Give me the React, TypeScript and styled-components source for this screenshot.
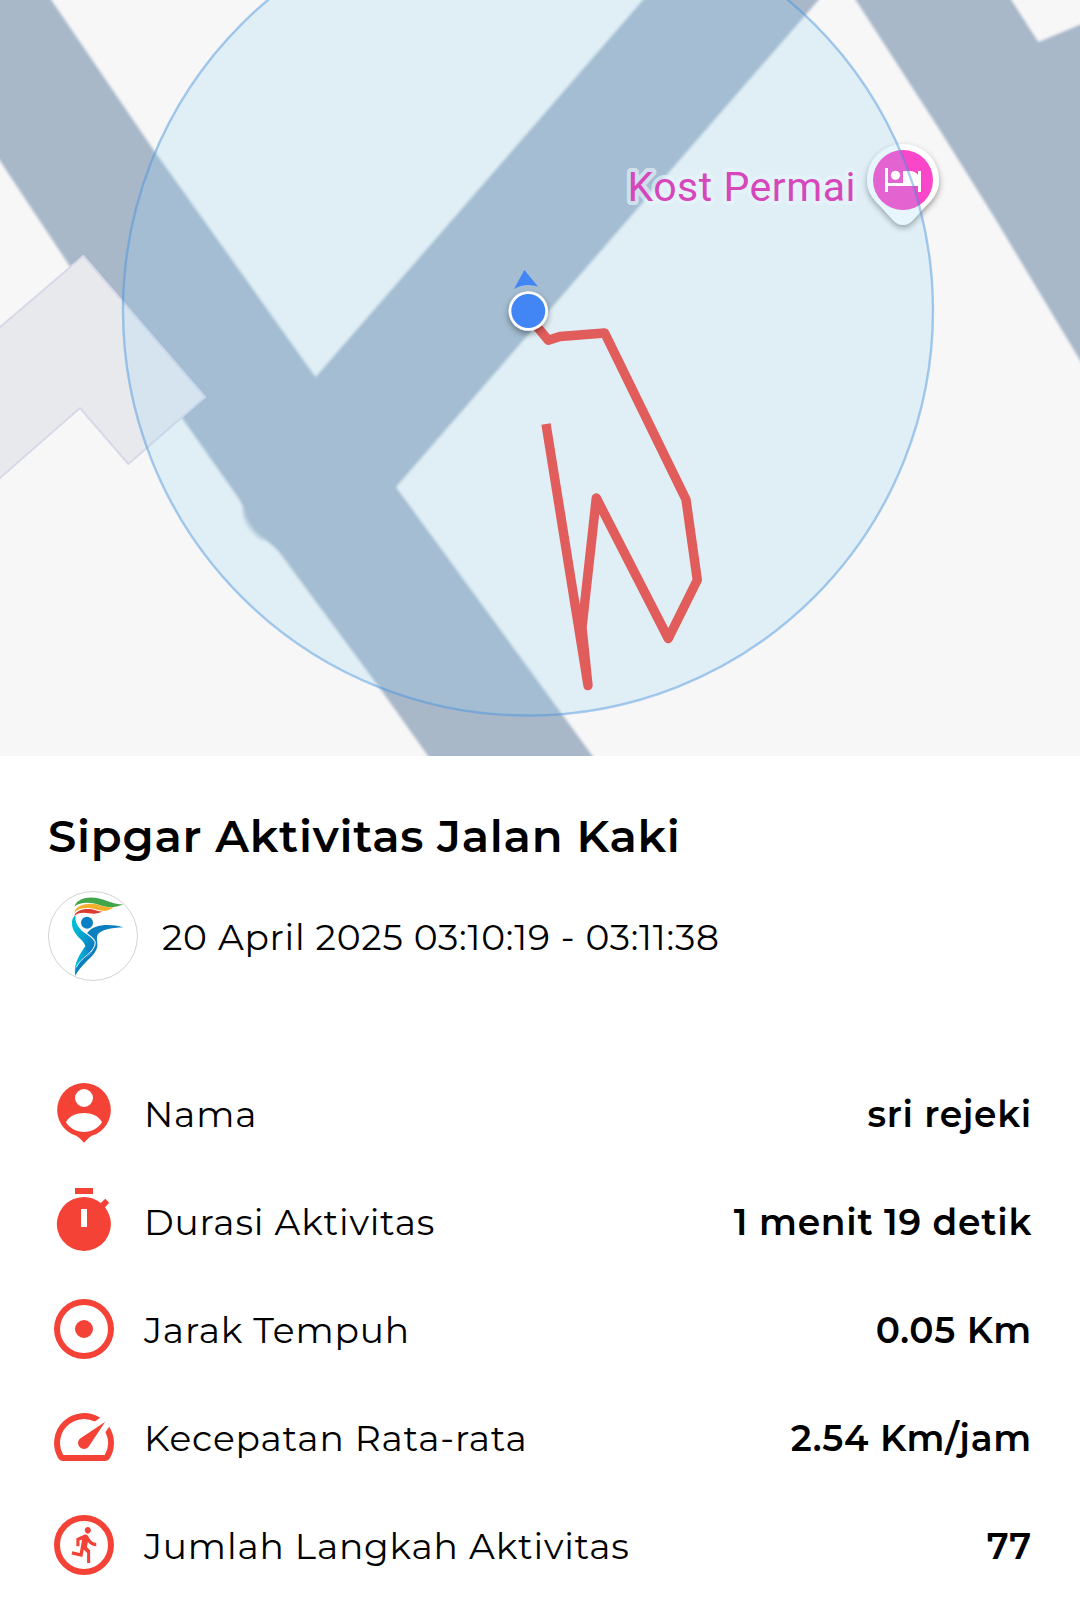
import React from 'react';
import styled, { createGlobalStyle } from 'styled-components';

const GlobalStyle = createGlobalStyle`
  *,
  *::before,
  *::after {
    box-sizing: border-box;
  }

  body {
    margin: 0;
    background: #ffffff;
    color: #000000;
    font-family: Montserrat, Inter, sans-serif;
    letter-spacing: 0.75px;
  }
`;

const PageContainer = styled.main`
  display: flex;
  flex-direction: column;
  width: 1080px;
  height: 1609px;
  overflow: hidden;
`;

const MapWrapper = styled.section`
  flex: none;
  height: 756px;
  background: #f7f7f7;
`;

const MapDrawing = styled.svg`
  display: block;
  width: 100%;
  height: 100%;
`;

const PlaceLabel = styled.text`
  font-family: Roboto, sans-serif;
  font-size: 41px;
  letter-spacing: 0;
  fill: #e821ac;
  stroke: rgba(255, 255, 255, 0.65);
  stroke-width: 8px;
  stroke-linejoin: round;
  paint-order: stroke;
`;

const Details = styled.section`
  display: flex;
  flex-direction: column;
  padding: 52px 48px 0;
`;

const Title = styled.h1`
  margin: 0;
  font-size: 45px;
  font-weight: 600;
  line-height: 56px;
  white-space: nowrap;
`;

const Schedule = styled.div`
  display: flex;
  align-items: center;
  gap: 24px;
  margin-top: 27px;
`;

const LogoDrawing = styled.svg`
  flex: none;
  width: 90px;
  height: 90px;
`;

const ScheduleText = styled.time`
  padding-top: 2px;
  font-size: 36px;
  font-weight: 400;
  line-height: 42px;
  white-space: nowrap;
`;

const StatList = styled.ul`
  display: flex;
  flex-direction: column;
  gap: 36px;
  margin: 96px 0 0;
  padding: 0;
  list-style: none;
`;

const StatRow = styled.li`
  display: flex;
  align-items: center;
  height: 72px;
`;

const StatIcon = styled.svg`
  flex: none;
  width: 72px;
  height: 72px;
  margin-right: 24px;
  fill: #f44336;
`;

const StatText = styled.span<{ $strong?: boolean }>`
  padding-top: 2px;
  font-size: 36px;
  font-weight: ${({ $strong }) => ($strong ? 600 : 400)};
  line-height: 42px;
  letter-spacing: ${({ $strong }) => ($strong ? 0.75 : 0.82)}px;
  white-space: nowrap;

  &:last-child {
    margin-left: auto;
  }
`;

const ROUTE =
  'M525 312L548.3 340.3L560 336.5L604.7 333L686 499.5L697.3 580L668.3 638.5L596.3 498L582 627.5L588 685.5L546 424';

const ActivityMap: React.FC = () => (
  <MapWrapper>
    <MapDrawing viewBox="0 0 1080 756">
      <defs>
        <filter id="roadSoft" x="-5%" y="-5%" width="110%" height="110%">
          <feGaussianBlur stdDeviation="1.5" />
        </filter>
        <filter id="drop" x="-30%" y="-30%" width="160%" height="160%">
          <feDropShadow dx="0" dy="3" stdDeviation="3" floodOpacity="0.4" />
        </filter>
        <clipPath id="belowStart">
          <rect y="424" width="1080" height="332" />
          <rect x="524" width="556" height="756" />
        </clipPath>
      </defs>

      {/* roads */}
      <g fill="#a9b8c9" stroke="#a3b4c6" strokeWidth="2" filter="url(#roadSoft)">
        <path d="M-20 -30H29L50 0L153 151L315.5 379L644.5 0L671 -30H842L817 0L394.5 487L592 757L607 778H445L430 757L381 688L279 550Q273 544 262 536Q252 527 247 516Q245 505 237.6 495L184 419L71 266L0 159L-20 130Z" />
        <path d="M838 -30L857 0L941 130L996 218L1080 358L1110 410V12L1080 26L1038 43.5L1010 0L992 -30Z" />
      </g>
      <path
        d="M242 506Q242 530 265 542L258 524Z"
        fill="#a9b8c9"
        fillOpacity="0.5"
        filter="url(#roadSoft)"
      />

      {/* building */}
      <path
        d="M-4 330.5L83.3 256L205 397L128.4 464L80 408L-4 481.5Z"
        fill="#e8e9ed"
        stroke="#d8d9e8"
        strokeWidth="2"
        strokeLinejoin="round"
      />

      <PlaceLabel x="627.5" y="201" textLength="228">
        Kost Permai
      </PlaceLabel>
      <path
        d="M903 144A36 36 0 0 1 939 180C939 193 931 201 924 208L912 221Q903 229 894 221L882 208C875 201 867 193 867 180A36 36 0 0 1 903 144Z"
        fill="#ffffff"
        filter="url(#drop)"
      />
      <circle cx="903" cy="180" r="30" fill="#fa46c8" />

      {/* accuracy radius */}
      <circle cx="528" cy="310.5" r="405" fill="rgba(145, 210, 240, 0.22)" />

      <path
        d="M885 168H888V183H903V171H910Q915 171 918 175V171H921V192H918V186H888V192H885Z"
        fill="#ffffff"
      />
      <circle cx="895.5" cy="175.3" r="4.6" fill="#ffffff" />

      <circle
        cx="528"
        cy="310.5"
        r="405"
        fill="none"
        stroke="rgba(66, 144, 222, 0.45)"
        strokeWidth="2.4"
      />

      <path
        d={ROUTE}
        fill="none"
        stroke="#e05d5b"
        strokeWidth="9.4"
        strokeLinejoin="round"
        clipPath="url(#belowStart)"
      />

      {/* current position */}
      <path d="M524.3 270L538 286.5Q525 282.5 514 289Z" fill="#4285f4" />
      <circle cx="528.3" cy="311" r="19.7" fill="#ffffff" filter="url(#drop)" />
      <circle cx="528.3" cy="311" r="17" fill="#4285f4" />
    </MapDrawing>
  </MapWrapper>
);

const SipgarLogo: React.FC = () => (
  <LogoDrawing viewBox="24 33 270 270">
    <defs>
      <linearGradient id="body" x1="0" y1="0" x2="0.7" y2="1">
        <stop offset="0.2" stopColor="#00bcd4" />
        <stop offset="0.75" stopColor="#0a80c4" />
      </linearGradient>
      <linearGradient id="leg" x1="0" y1="0" x2="1" y2="0">
        <stop offset="0" stopColor="#00c4dc" />
        <stop offset="1" stopColor="#0a90c8" />
      </linearGradient>
    </defs>
    <circle cx="159" cy="168" r="133.5" fill="#ffffff" stroke="#b4b4b4" strokeWidth="1.8" />
    <path d="M103 80C112 53 148 48 180 56C205 62 225 74 250 73C225 84 205 83 185 77C155 66 122 64 103 80Z" fill="#43a54a" />
    <path d="M103 98C106 76 143 67 170 73C190 80 205 84 222 80C205 94 190 95 172 89C145 81 117 82 103 98Z" fill="#f3ae2b" />
    <path d="M103 109C105 92 133 84 155 88C170 92 180 96 189 94C175 102 160 102 148 100C128 96 112 98 103 109Z" fill="#dc3a33" />
    <circle cx="141" cy="128" r="18" fill="#0a80c4" />
    <path
      d="M103 108C92 120 94 142 106 160C118 178 135 185 136 201C125 220 102 245 105 287C112 250 160 225 164 188C160 174 140 164 124 150C110 137 105 123 107 108Z"
      fill="url(#body)"
    />
    <path d="M134 200C122 221 101 246 105 284C108 256 122 236 145 219Z" fill="url(#leg)" />
    <path
      d="M141 160C160 132 208 130 250 142C212 144 184 149 173 164C168 174 173 184 172 198C169 228 126 247 106 288C105 251 147 233 158 210C170 190 166 176 141 160Z"
      fill="#0a7fbe"
    />
    <path
      d="M123 149C143 166 166 172 166 190C164 216 122 232 109 262"
      fill="none"
      stroke="#ffffff"
      strokeWidth="2.5"
    />
  </LogoDrawing>
);

const PersonIcon = (
  <path
    fillRule="evenodd"
    d="M12 2A9 9 0 0 1 14.6 19.6Q14 19.8 12 21.9Q10 19.8 9.4 19.6A9 9 0 0 1 12 2ZM12 4A3 3 0 1 0 12 10A3 3 0 1 0 12 4ZM6 15.1C7.4 17.2 9.5 18.3 12 18.3S16.6 17.2 18 15.1C17 13 14.5 12 12 12S7 13 6 15.1Z"
  />
);

const TimerIcon = (
  <path
    fillRule="evenodd"
    d="M9 1H15V3H9ZM12 4C14.1 4 16 4.7 17.6 6L19.1 4.6L20.4 5.9L19 7.4A9 9 0 1 1 12 4ZM11 8V14H13V8Z"
  />
);

const RadiusIcon = (
  <path
    fillRule="evenodd"
    d="M12 2A10 10 0 1 0 12 22A10 10 0 1 0 12 2ZM12 4A8 8 0 1 1 12 20A8 8 0 1 1 12 4ZM12 9A3 3 0 1 0 12 15A3 3 0 1 0 12 9Z"
  />
);

const SpeedIcon = (
  <path d="M20.38 8.57l-1.23 1.85a8 8 0 0 1-.22 7.58H5.07A8 8 0 0 1 15.58 6.85l1.85-1.23A10 10 0 0 0 3.35 19a2 2 0 0 0 1.72 1h13.85a2 2 0 0 0 1.74-1 10 10 0 0 0-.27-10.44zm-9.79 6.84a2 2 0 0 0 2.83 0l5.66-8.49-8.49 5.66a2 2 0 0 0 0 2.83z" />
);

const StepsIcon = (
  <>
    <circle cx="12" cy="12" r="9" fill="none" stroke="#f44336" strokeWidth="2" />
    <path
      transform="translate(6.4 5.17) scale(0.51 0.558)"
      d="M13.49 5.48c1.1 0 2-.9 2-2s-.9-2-2-2-2 .9-2 2 .9 2 2 2zm-3.6 13.9l1-4.4 2.1 2v6h2v-7.5l-2.1-2 .6-3c1.3 1.5 3.3 2.5 5.5 2.5v-2c-1.9 0-3.5-1-4.3-2.4l-1-1.6c-.4-.6-1-1-1.7-1-.3 0-.5.1-.8.1l-5.2 2.2v4.7h2v-3.4l1.8-.7-1.6 8.1-4.9-1-.4 2 7 1.4z"
    />
  </>
);

interface Stat {
  icon: React.ReactNode;
  label: string;
  value: string;
}

const stats: Stat[] = [
  { icon: PersonIcon, label: 'Nama', value: 'sri rejeki' },
  { icon: TimerIcon, label: 'Durasi Aktivitas', value: '1 menit 19 detik' },
  { icon: RadiusIcon, label: 'Jarak Tempuh', value: '0.05 Km' },
  { icon: SpeedIcon, label: 'Kecepatan Rata-rata', value: '2.54 Km/jam' },
  { icon: StepsIcon, label: 'Jumlah Langkah Aktivitas', value: '77' },
];

const App: React.FC = () => {
  return (
    <PageContainer>
      <GlobalStyle />
      <ActivityMap />
      <Details>
        <Title>Sipgar Aktivitas Jalan Kaki</Title>
        <Schedule>
          <SipgarLogo />
          <ScheduleText>20 April 2025 03:10:19 - 03:11:38</ScheduleText>
        </Schedule>
        <StatList>
          {stats.map(({ icon, label, value }) => (
            <StatRow key={label}>
              <StatIcon viewBox="0 0 24 24">{icon}</StatIcon>
              <StatText>{label}</StatText>
              <StatText $strong>{value}</StatText>
            </StatRow>
          ))}
        </StatList>
      </Details>
    </PageContainer>
  );
};

export default App;
